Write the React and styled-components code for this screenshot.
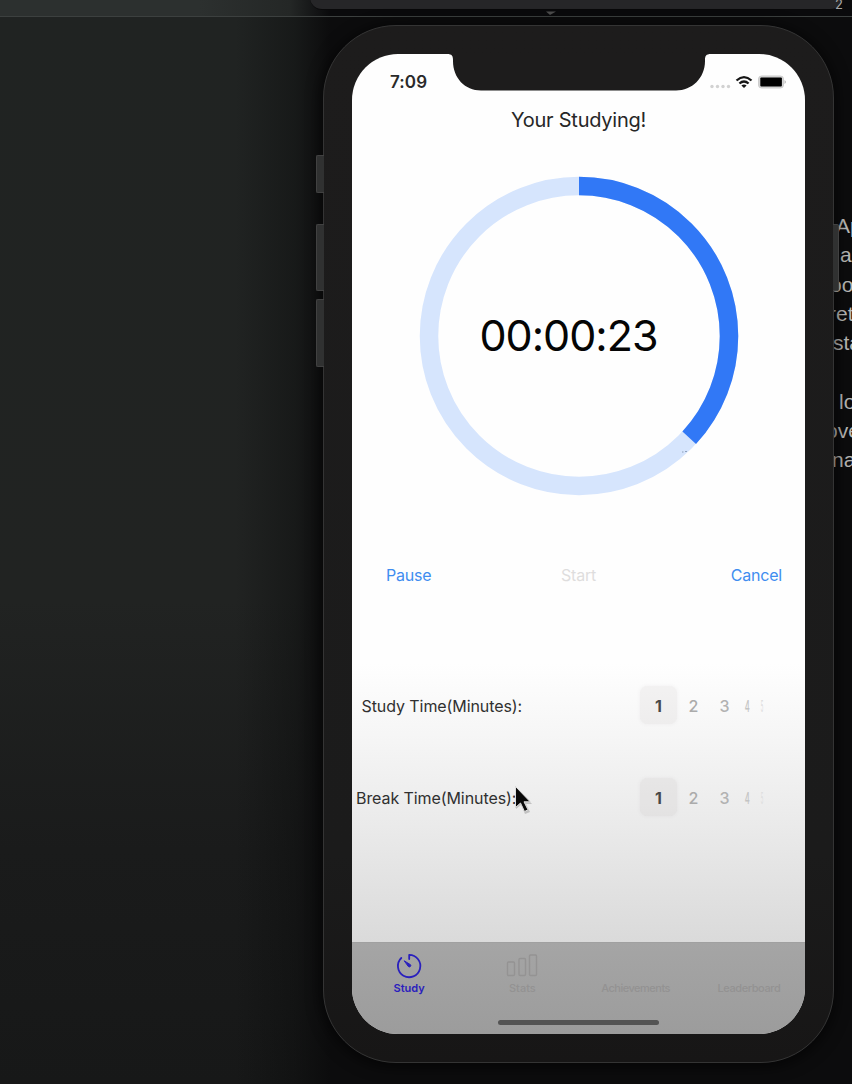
import React from "react";
import styled, { createGlobalStyle } from "styled-components";

const GlobalStyle = createGlobalStyle`
  * { box-sizing: border-box; }
  body { margin: 0; background: #1c1e1d; font-family: Inter, "Liberation Sans", sans-serif; }
`;

const Desktop = styled.main`
  position: relative;
  display: flex;
  width: 852px;
  height: 1084px;
  padding: 25px 0 0 323px;
  overflow: hidden;
  background:
    linear-gradient(90deg, rgba(10, 11, 11, 0) 0 235px, rgba(10, 11, 11, 0.4) 295px, #0c0c0d 330px),
    linear-gradient(180deg, #202322 0, #212322 600px, #1a1b1b 850px, #171818 1084px);
`;

const TopStrip = styled.div`
  position: absolute;
  inset: 0 0 auto 0;
  height: 17px;
  border-bottom: 1px solid #3c403f;
  background: linear-gradient(90deg, #2c302f 0 200px, #242726 290px, #0a0a0c 330px);
`;

const WindowEdge = styled.div`
  position: absolute;
  left: 310px;
  top: -10px;
  width: 533px;
  height: 20px;
  border-radius: 0 0 12px 12px;
  background: #262628;
  border-bottom: 1px solid #09090a;
`;

const EdgeLabel = styled.span`
  position: absolute;
  left: 525px;
  top: 7px;
  font-size: 13px;
  line-height: 15px;
  color: #a5a5a5;
`;

const EdgeGlint = styled.svg`
  position: absolute;
  left: 236px;
  top: 21px;
  width: 10px;
  height: 4px;
`;

const Phone = styled.section`
  position: relative;
  flex: none;
  width: 511px;
  height: 1038px;
  padding: 28px 28px 30px 28px;
  border: 1px solid #343434;
  border-radius: 73px;
  background: linear-gradient(#1d1c1c, #1b1b1b 80%, #171616);
  box-shadow: 0 2px 14px 3px rgba(0, 0, 0, 0.55);
  z-index: 1;
`;

const SideButton = styled.i`
  position: absolute;
  left: ${(p) => (p.$right ? "509px" : "-8px")};
  top: ${(p) => p.$top}px;
  width: ${(p) => (p.$right ? 6 : 8)}px;
  height: ${(p) => p.$height}px;
  border: 1px solid #414141;
  border-width: ${(p) => (p.$right ? "1px 1px 1px 0" : "1px 0 1px 1px")};
  border-radius: ${(p) => (p.$right ? "0 2px 2px 0" : "2px 0 0 2px")};
  background: #303131;
`;

const Screen = styled.div`
  position: relative;
  display: flex;
  flex-direction: column;
  width: 453px;
  height: 980px;
  overflow: hidden;
  border-radius: 46px;
  background: linear-gradient(#fefefe 0 610px, #f6f6f6 680px, #e9e9e9 780px, #dadada 888px);
`;

const Notch = styled.svg`
  position: absolute;
  left: 95px;
  top: 0;
  width: 264px;
  height: 37px;
`;

const StatusBar = styled.header`
  display: flex;
  align-items: center;
  justify-content: space-between;
  height: 54px;
  padding: 1px 19px 0 38px;
`;

const Clock = styled.time`
  font-size: 17px;
  font-weight: 600;
  letter-spacing: 0.1px;
  color: #2a2a2a;
`;

const StatusIcons = styled.svg`
  width: 78px;
  height: 18px;
`;

const Title = styled.h1`
  margin: 0;
  height: 25px;
  font-size: 20px;
  line-height: 25px;
  font-weight: 400;
  letter-spacing: -0.25px;
  text-align: center;
  color: #272727;
`;

const Dial = styled.div`
  display: grid;
  place-items: center;
  width: 320px;
  height: 320px;
  margin: 43px 0 0 67px;
  & > * { grid-area: 1 / 1; }
`;

const Ring = styled.svg`
  width: 320px;
  height: 320px;
`;

const Remaining = styled.span`
  margin-right: 21px;
  padding-bottom: 2px;
  font-size: 43px;
  line-height: 50px;
  letter-spacing: -1px;
  color: #050505;
`;

const Controls = styled.div`
  display: flex;
  justify-content: space-between;
  height: 24px;
  margin-top: 67px;
  padding: 0 23px 0 34px;
`;

const Control = styled.button`
  border: 0;
  padding: 0;
  background: none;
  font: 400 16px/24px Inter, "Liberation Sans", sans-serif;
  letter-spacing: -0.2px;
  margin-left: ${(p) => p.$nudge || 0}px;
  color: ${(p) => (p.disabled ? "#dedddd" : "#3f8df0")};
`;

const Settings = styled.div`
  display: flex;
  flex-direction: column;
  gap: 54px;
  margin-top: 99px;
`;

const SettingRow = styled.div`
  display: flex;
  align-items: center;
  justify-content: space-between;
  height: 38px;
  padding: 0 35px 0 ${(p) => p.$inset}px;
`;

const SettingLabel = styled.span`
  padding-top: 1px;
  font-size: 16px;
  letter-spacing: -0.08px;
  white-space: nowrap;
  color: #303030;
`;

const Picker = styled.div`
  display: flex;
  align-items: center;
  width: 130px;
`;

const Choice = styled.span`
  flex: none;
  overflow: hidden;
  width: ${(p) => p.$width}px;
  height: 38px;
  line-height: 40px;
  border-radius: 7px;
  text-align: center;
  font-size: 16px;
  font-weight: ${(p) => (p.$selected ? 700 : 500)};
  color: ${(p) => p.$color};
  background: ${(p) => (p.$selected ? "rgba(90, 75, 80, 0.055)" : "none")};
  box-shadow: ${(p) => (p.$selected ? "0 0 4px rgba(90, 75, 80, 0.06)" : "none")};
`;

const Narrow = styled.span`
  display: inline-block;
  transform: scaleX(${(p) => p.$scale});
`;

const TabBar = styled.nav`
  position: relative;
  display: grid;
  grid-template-columns: repeat(4, 1fr);
  height: 92px;
  margin-top: auto;
  border-top: 1px solid #a0a0a0;
  background: linear-gradient(#a5a5a5, #9c9c9c);
`;

const Tab = styled.div`
  display: flex;
  flex-direction: column;
  align-items: center;
  padding: 9px 0 0 1px;
  font-size: 11px;
  line-height: 14px;
  letter-spacing: ${(p) => p.$spacing || 0}px;
  font-weight: ${(p) => (p.$active ? 600 : 500)};
  color: ${(p) => (p.$active ? "#2a20bd" : "#939292")};
`;

const TabIcon = styled.svg`
  width: 34px;
  height: 28px;
  margin-bottom: 1px;
`;

const HomeBar = styled.i`
  position: absolute;
  left: 146px;
  bottom: 9px;
  width: 161px;
  height: 5px;
  border-radius: 3px;
  background: #545454;
`;

const Pointer = styled.svg`
  position: absolute;
  left: 162px;
  top: 731px;
  width: 20px;
  height: 32px;
`;

const Notes = styled.aside`
  flex: none;
  width: 100px;
  padding-top: 186px;
  font: 21px/29.3px "Liberation Sans", Arial, sans-serif;
  color: #b9b9b7;
`;

const NoteLine = styled.div`
  height: 29.3px;
  margin-left: ${(p) => p.$shift}px;
  white-space: nowrap;
`;

const noteLines = [
  ["Ap", 2], ["a", 6], ["oo", -4], ["ret", -5], ["sta", -1], ["", 0], ["lo", 5], ["ove", -8], ["na", -2],
];

const choices = [
  { label: "1", width: 37, color: "#484848" },
  { label: "2", width: 33, color: "#ababab" },
  { label: "3", width: 29, color: "#b2b2b2" },
  { label: "4", width: 17, color: "#c3c3c3", scale: 0.48 },
  { label: "5", width: 12, color: "#dedede", scale: 0.25 },
];

function Setting({ label, inset }) {
  return (
    <SettingRow $inset={inset}>
      <SettingLabel>{label}</SettingLabel>
      <Picker>
        {choices.map((c, i) => (
          <Choice key={c.label} $width={c.width} $color={c.color} $selected={i === 0}>
            <Narrow $scale={c.scale || 1}>{c.label}</Narrow>
          </Choice>
        ))}
      </Picker>
    </SettingRow>
  );
}

export default function App() {
  const circumference = 2 * Math.PI * 150;
  return (
    <Desktop>
      <GlobalStyle />
      <TopStrip />
      <WindowEdge>
        <EdgeLabel>2</EdgeLabel>
        <EdgeGlint viewBox="0 0 10 4"><path d="M0 0.500h10L4 4Z" fill="#4c4c4c" /></EdgeGlint>
      </WindowEdge>
      <Phone>
        <SideButton $top={129} $height={38} />
        <SideButton $top={198} $height={67} />
        <SideButton $top={273} $height={68} />
        <SideButton $right $top={198} $height={67} />
        <Screen>
          <Notch viewBox="0 0 264 37">
            <path d="M0 0C5 0 6 2 6 6v1C6 24 18 36.500 34 36.500H229C245 36.500 258 24 258 7V6c0-4 1-6 6-6Z" fill="#1d1c1c" />
          </Notch>
          <StatusBar>
            <Clock>7:09</Clock>
            <StatusIcons viewBox="0 0 78 18">
              <g fill="#d2d2d2">
                <circle cx="4" cy="13.500" r="1.700" /><circle cx="9.500" cy="13.500" r="1.700" />
                <circle cx="15" cy="13.500" r="1.700" /><circle cx="20.500" cy="13.500" r="1.700" />
              </g>
              <g fill="none" stroke="#161616" strokeWidth="2.300">
                <path d="M28.500 7.500Q36 0.800 43.500 7.500" />
                <path d="M31.400 10.500Q36 6.500 40.600 10.500" />
              </g>
              <path d="M33.400 12.500Q36 10.400 38.600 12.500L36 15Z" fill="#161616" />
              <rect x="50.500" y="3" width="25" height="12" rx="3" fill="#d5d5d5" stroke="#cdcdcd" />
              <rect x="52.300" y="4.600" width="21.600" height="9" rx="1" fill="#000" />
              <path d="M76.500 7v4q1.500-.8 1.500-2t-1.500-2" fill="#bbb" />
            </StatusIcons>
          </StatusBar>
          <Title>Your Studying!</Title>
          <Dial>
            <Ring viewBox="0 0 320 320">
              <circle cx="160" cy="160" r="150" fill="none" stroke="#d6e5fd" strokeWidth="18.500" />
              <circle
                cx="160" cy="160" r="150" fill="none" stroke="#3178f6" strokeWidth="18.500"
                strokeDasharray={`${circumference * 0.3685} ${circumference}`}
                transform="rotate(-90 160 160)"
              />
              <path d="M263 276h1.500M266 275.500h2" stroke="#8ea0bb" />
            </Ring>
            <Remaining>00:00:23</Remaining>
          </Dial>
          <Controls>
            <Control>Pause</Control>
            <Control disabled $nudge={-5}>Start</Control>
            <Control>Cancel</Control>
          </Controls>
          <Settings>
            <Setting label="Study Time(Minutes):" inset={9.5} />
            <Setting label="Break Time(Minutes):" inset={4} />
          </Settings>
          <TabBar>
            <Tab $active>
              <TabIcon viewBox="0 0 34 28" fill="none" stroke="#2a20bd" strokeWidth="1.800" strokeLinecap="round" strokeLinejoin="round">
                <path d="M17.200 7V2.800A11.200 11.200 0 1 1 9.300 6" />
                <path d="m12.500 9 6 3.700a1.400 1.400 0 0 1-1.900 2Z" fill="#2a20bd" strokeWidth="1" />
              </TabIcon>
              Study
            </Tab>
            <Tab>
              <TabIcon viewBox="0 0 34 28" fill="none" stroke="#949393" strokeWidth="1.400">
                <rect x="2.500" y="10" width="7" height="13.500" rx="1" />
                <rect x="14" y="6.500" width="6.500" height="17" rx="1" />
                <rect x="24.500" y="3" width="7" height="20.500" rx="1" />
              </TabIcon>
              Stats
            </Tab>
            <Tab $spacing={-0.5}>
              <TabIcon />
              Achievements
            </Tab>
            <Tab $spacing={-0.4}>
              <TabIcon />
              Leaderboard
            </Tab>
            <HomeBar />
          </TabBar>
          <Pointer viewBox="0 0 20 32">
            <path d="M2 3v21l5-4 4 9 5-2-4-8h6Z" fill="#a5a5a5" opacity=".6" />
            <path d="M1.500 1.500v21l5-4.500 4 8.500 3.500-1.700-4-8h6.200Z" fill="#080808" stroke="#ddd" strokeWidth="1" />
          </Pointer>
        </Screen>
      </Phone>
      <Notes>
        {noteLines.map(([text, shift], i) => (
          <NoteLine key={i} $shift={shift}>{text}</NoteLine>
        ))}
      </Notes>
    </Desktop>
  );
}
